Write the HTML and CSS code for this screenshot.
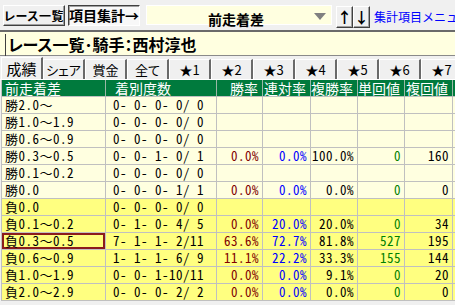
FILE: index.html
```html
<!DOCTYPE html>
<html lang="ja">
<head>
  <meta charset="UTF-8">
  <meta name="viewport" content="width=device-width, initial-scale=1.0">
  <title>項目集計</title>
  <link rel="stylesheet" href="styles.css">
</head>
<body>

<div class="toolbar">
  <button class="btn btn-list">レース一覧</button>
  <button class="btn btn-sum pressed">項目集計→</button>
  <div class="combo">
    <span class="combo-text">前走着差</span>
    <span class="combo-arrow"></span>
  </div>
  <button class="btn btn-arrow">↑</button>
  <button class="btn btn-arrow">↓</button>
  <span class="menu-link">集計項目メニュー</span>
</div>

<div class="title-bar">
  <div class="title-text">レース一覧･騎手：西村淳也</div>
</div>

<div class="tabs">
  <div class="tab active">成績</div>
  <div class="tab">シェア</div>
  <div class="tab">賞金</div>
  <div class="tab">全て</div>
  <div class="tab">★1</div>
  <div class="tab">★2</div>
  <div class="tab">★3</div>
  <div class="tab">★4</div>
  <div class="tab">★5</div>
  <div class="tab">★6</div>
  <div class="tab">★7</div>
</div>

<table class="grid">
  <colgroup>
    <col class="c-name">
    <col class="c-count">
    <col class="c-rate">
    <col class="c-rate2">
    <col class="c-rate3">
    <col class="c-val">
    <col class="c-val2">
    <col class="c-more">
  </colgroup>
  <thead>
    <tr>
      <th class="h-name">前走着差</th>
      <th class="h-count">着別度数</th>
      <th>勝率</th>
      <th>連対率</th>
      <th>複勝率</th>
      <th>単回値</th>
      <th>複回値</th>
      <th></th>
    </tr>
  </thead>
  <tbody>
    <tr class="win">
      <td class="name">勝2.0～</td><td class="count">0- 0- 0- 0/ 0</td>
      <td></td><td></td><td></td><td></td><td></td><td></td>
    </tr>
    <tr class="win">
      <td class="name">勝1.0～1.9</td><td class="count">0- 0- 0- 0/ 0</td>
      <td></td><td></td><td></td><td></td><td></td><td></td>
    </tr>
    <tr class="win">
      <td class="name">勝0.6～0.9</td><td class="count">0- 0- 0- 0/ 0</td>
      <td></td><td></td><td></td><td></td><td></td><td></td>
    </tr>
    <tr class="win">
      <td class="name">勝0.3～0.5</td><td class="count">0- 0- 1- 0/ 1</td>
      <td class="num red">0.0%</td><td class="num blue">0.0%</td><td class="num">100.0%</td>
      <td class="num green">0</td><td class="num">160</td><td></td>
    </tr>
    <tr class="win">
      <td class="name">勝0.1～0.2</td><td class="count">0- 0- 0- 0/ 0</td>
      <td></td><td></td><td></td><td></td><td></td><td></td>
    </tr>
    <tr class="win">
      <td class="name">勝0.0</td><td class="count">0- 0- 0- 1/ 1</td>
      <td class="num red">0.0%</td><td class="num blue">0.0%</td><td class="num">0.0%</td>
      <td class="num green">0</td><td class="num">0</td><td></td>
    </tr>
    <tr class="lose">
      <td class="name">負0.0</td><td class="count">0- 0- 0- 0/ 0</td>
      <td></td><td></td><td></td><td></td><td></td><td></td>
    </tr>
    <tr class="lose">
      <td class="name">負0.1～0.2</td><td class="count">0- 1- 0- 4/ 5</td>
      <td class="num red">0.0%</td><td class="num blue">20.0%</td><td class="num">20.0%</td>
      <td class="num green">0</td><td class="num">34</td><td></td>
    </tr>
    <tr class="lose">
      <td class="name selected">負0.3～0.5</td><td class="count">7- 1- 1- 2/11</td>
      <td class="num red">63.6%</td><td class="num blue">72.7%</td><td class="num">81.8%</td>
      <td class="num green">527</td><td class="num">195</td><td></td>
    </tr>
    <tr class="lose">
      <td class="name">負0.6～0.9</td><td class="count">1- 1- 1- 6/ 9</td>
      <td class="num red">11.1%</td><td class="num blue">22.2%</td><td class="num">33.3%</td>
      <td class="num green">155</td><td class="num">144</td><td></td>
    </tr>
    <tr class="lose">
      <td class="name">負1.0～1.9</td><td class="count">0- 0- 1-10/11</td>
      <td class="num red">0.0%</td><td class="num blue">0.0%</td><td class="num">9.1%</td>
      <td class="num green">0</td><td class="num">20</td><td></td>
    </tr>
    <tr class="lose">
      <td class="name">負2.0～2.9</td><td class="count">0- 0- 0- 2/ 2</td>
      <td class="num red">0.0%</td><td class="num blue">0.0%</td><td class="num">0.0%</td>
      <td class="num green">0</td><td class="num">0</td><td></td>
    </tr>
  </tbody>
</table>

</body>
</html>
```

FILE: styles.css
```css
html, body {
  margin: 0;
}
body {
  width: 455px;
  height: 305px;
  overflow: hidden;
  background-color: #f0f0f0;
  font-family: "Noto Sans CJK JP", sans-serif;
  color: #000;
}

/* toolbar */
.toolbar {
  display: flex;
  align-items: flex-start;
  height: 30px;
  padding-top: 5px;
  box-sizing: border-box;
  white-space: nowrap;
  overflow: hidden;
}
.btn {
  height: 21px;
  padding: 0;
  margin: 0;
  font-family: "Noto Sans CJK JP", sans-serif;
  font-size: 14px;
  font-weight: bold;
  font-feature-settings: "palt";
  line-height: 17px;
  background-color: #f0f0f0;
  border: 1px solid;
  border-color: #fff #404040 #404040 #fff;
  box-shadow: inset -1px -1px 0 #a0a0a0;
  color: #000;
  white-space: nowrap;
}
.btn-list {
  width: 70px;
  margin-left: 3px;
  font-size: 12px;
  letter-spacing: 0.5px;
}
.btn-sum {
  width: 77px;
  margin-left: 3px;
}
.pressed {
  background-color: #f8f8f8;
  border-color: #404040 #fff #fff #404040;
  box-shadow: inset 1px 1px 0 #a0a0a0;
}
.combo {
  position: relative;
  flex: 0 0 186px;
  height: 20px;
  margin-left: 6px;
  background-color: #ffffe0;
  border: 1px solid #fff;
  box-sizing: border-box;
  text-align: center;
}
.combo-text {
  display: inline-block;
  margin-right: 6px;
  font-size: 14px;
  font-weight: bold;
  line-height: 18px;
}
.combo-arrow {
  position: absolute;
  right: 5px;
  top: 7px;
  width: 0;
  height: 0;
  border-top: 7px solid #808080;
  border-left: 6px solid transparent;
  border-right: 6px solid transparent;
}
.btn-arrow {
  flex: 0 0 16px;
  height: 22px;
  margin-top: 1px;
  font-size: 15px;
  line-height: 18px;
}
.combo + .btn-arrow {
  margin-left: 4px;
}
.menu-link {
  margin-left: 4px;
  margin-top: 4px;
  font-size: 12px;
  line-height: 16px;
  color: #0000ff;
}

/* title */
.title-bar {
  height: 26px;
  box-sizing: border-box;
  background-color: #ffffe0;
  border-top: 2px solid #6a6a6a;
  border-bottom: 1px solid #8a8a8a;
  padding: 2px 0 0 5px;
}
.title-text {
  height: 22px;
  border-left: 1px solid #404040;
  padding-left: 2px;
  font-size: 16px;
  font-weight: bold;
  font-feature-settings: "palt";
  line-height: 21px;
  white-space: nowrap;
}

/* tabs */
.tabs {
  display: flex;
  align-items: flex-end;
  height: 24px;
  padding-left: 1px;
  border-bottom: 1px solid #fff;
  box-sizing: border-box;
  overflow: hidden;
}
.tab {
  flex: 0 0 42px;
  height: 20px;
  box-sizing: border-box;
  border-top: 1px solid #fff;
  border-left: 1px solid #fff;
  border-right: 2px solid #696969;
  font-size: 13px;
  line-height: 19px;
  text-align: center;
  font-feature-settings: "palt";
  white-space: nowrap;
}
.tab.active {
  height: 22px;
  font-size: 15px;
  line-height: 21px;
}

/* grid */
.grid {
  border-collapse: separate;
  border-spacing: 0;
  table-layout: fixed;
  width: 454px;
  margin-left: 1px;
  border-left: 1px solid #c0c0c0;
}
.c-name { width: 104px; }
.c-count { width: 111px; }
.c-rate { width: 46px; }
.c-rate2 { width: 48px; }
.c-rate3 { width: 47px; }
.c-val { width: 47px; }
.c-val2 { width: 48px; }
.c-more { width: 2px; }

.grid th,
.grid td {
  height: 17px;
  padding: 0 4px 0 0;
  border-right: 1px solid #c0c0c0;
  border-bottom: 1px solid #c0c0c0;
  box-sizing: border-box;
  white-space: pre;
}
.grid th {
  background-color: #007a3d;
  color: #fff;
  font-size: 14px;
  font-weight: normal;
  line-height: 16px;
  text-align: right;
  border-color: #9ab8a6;
  border-bottom-color: #c0c0c0;
}
.grid th.h-name {
  text-align: left;
  padding-left: 3px;
}
.grid th.h-count {
  text-align: left;
  padding-left: 9px;
}
.grid td {
  font-family: "Noto Sans Mono CJK JP", "Liberation Mono", monospace;
  font-size: 13px;
  letter-spacing: 0.5px;
  line-height: 16px;
}
.grid th:last-child,
.grid td:last-child {
  padding: 0;
  border-right: none;
}
.win td { background-color: #ffffe0; }
.lose td { background-color: #ffff80; }

.grid td.name {
  padding-left: 3px;
  text-align: left;
}
.grid td.count {
  padding-left: 7px;
  text-align: left;
}
.grid td.num {
  text-align: right;
  padding-right: 3px;
}
.grid td.selected {
  box-shadow: inset 0 0 0 2px #8b1c1c;
}
.red { color: #800000; }
.blue { color: #0000ff; }
.green { color: #008000; }
```
